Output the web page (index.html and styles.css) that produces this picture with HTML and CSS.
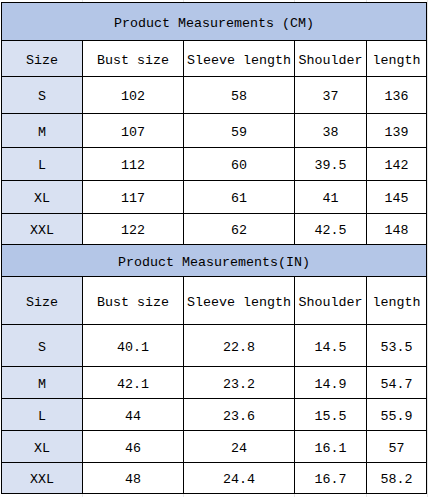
FILE: index.html
```html
<!DOCTYPE html>
<html lang="en">
<head>
<meta charset="utf-8">
<title>Product Measurements</title>
<link rel="stylesheet" href="styles.css">
</head>
<body>
<div class="sheet">
  <div class="size-table">
    <div class="cell title">Product Measurements (CM)</div>
    <div class="cell size">Size</div>
    <div class="cell">Bust size</div>
    <div class="cell">Sleeve length</div>
    <div class="cell">Shoulder</div>
    <div class="cell">length</div>

    <div class="cell size">S</div><div class="cell">102</div><div class="cell">58</div><div class="cell">37</div><div class="cell">136</div>
    <div class="cell size">M</div><div class="cell">107</div><div class="cell">59</div><div class="cell">38</div><div class="cell">139</div>
    <div class="cell size">L</div><div class="cell">112</div><div class="cell">60</div><div class="cell">39.5</div><div class="cell">142</div>
    <div class="cell size">XL</div><div class="cell">117</div><div class="cell">61</div><div class="cell">41</div><div class="cell">145</div>
    <div class="cell size">XXL</div><div class="cell">122</div><div class="cell">62</div><div class="cell">42.5</div><div class="cell">148</div>

    <div class="cell title">Product Measurements(IN)</div>
    <div class="cell size">Size</div>
    <div class="cell">Bust size</div>
    <div class="cell">Sleeve length</div>
    <div class="cell">Shoulder</div>
    <div class="cell">length</div>

    <div class="cell size">S</div><div class="cell">40.1</div><div class="cell">22.8</div><div class="cell">14.5</div><div class="cell">53.5</div>
    <div class="cell size">M</div><div class="cell">42.1</div><div class="cell">23.2</div><div class="cell">14.9</div><div class="cell">54.7</div>
    <div class="cell size">L</div><div class="cell">44</div><div class="cell">23.6</div><div class="cell">15.5</div><div class="cell">55.9</div>
    <div class="cell size">XL</div><div class="cell">46</div><div class="cell">24</div><div class="cell">16.1</div><div class="cell">57</div>
    <div class="cell size">XXL</div><div class="cell">48</div><div class="cell">24.4</div><div class="cell">16.7</div><div class="cell">58.2</div>
  </div>
</div>
</body>
</html>
```

FILE: styles.css
```css
html, body {
  margin: 0;
  padding: 0;
  background: #ffffff;
}

/* spreadsheet backdrop with faint gridlines around the bordered table */
.sheet {
  width: 429px;
  height: 497px;
  padding: 2px 0 0 1px;
  box-sizing: border-box;
  background:
    linear-gradient(#e4e4e4, #e4e4e4) 82px 0 / 1px 100% no-repeat,
    linear-gradient(#e4e4e4, #e4e4e4) 183px 0 / 1px 100% no-repeat,
    linear-gradient(#e4e4e4, #e4e4e4) 294px 0 / 1px 100% no-repeat,
    linear-gradient(#e4e4e4, #e4e4e4) 366px 0 / 1px 100% no-repeat,
    linear-gradient(#e4e4e4, #e4e4e4) 427px 0 / 1px 100% no-repeat,
    #ffffff;
}

.size-table {
  display: grid;
  width: 426px;
  box-sizing: border-box;
  grid-template-columns: 81px 101px 111px 72px 60px;
  grid-template-rows: 38px 36px 37px 34px 33px 33px 31px 32px 48px 42px 32px 32px 32px 31px;
  border-top: 1px solid #000;
  border-left: 1px solid #000;
  font-family: "Liberation Mono", "DejaVu Sans Mono", monospace;
  font-size: 13.33px;
  color: #000;
}

.cell {
  box-sizing: border-box;
  border-right: 1px solid #000;
  border-bottom: 1px solid #000;
  display: flex;
  align-items: center;
  justify-content: center;
  padding-top: 3px;
  white-space: nowrap;
  background: #ffffff;
}

.title {
  grid-column: 1 / -1;
  background: #b4c6e7;
}

.size {
  background: #d9e1f2;
}
```
